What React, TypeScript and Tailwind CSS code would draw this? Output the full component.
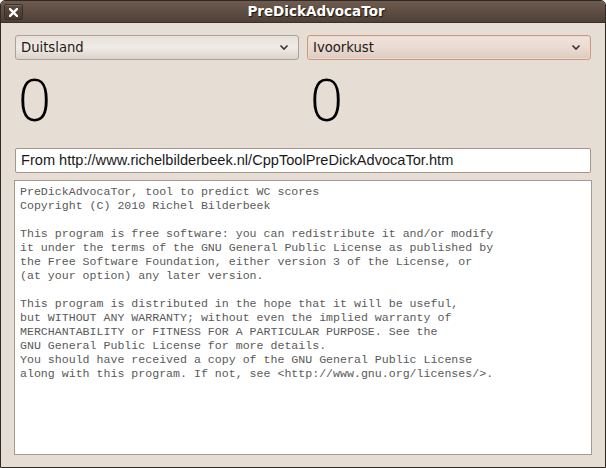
import React from 'react';

const licence = `PreDickAdvocaTor, tool to predict WC scores
Copyright (C) 2010 Richel Bilderbeek

This program is free software: you can redistribute it and/or modify
it under the terms of the GNU General Public License as published by
the Free Software Foundation, either version 3 of the License, or
(at your option) any later version.

This program is distributed in the hope that it will be useful,
but WITHOUT ANY WARRANTY; without even the implied warranty of
MERCHANTABILITY or FITNESS FOR A PARTICULAR PURPOSE. See the
GNU General Public License for more details.
You should have received a copy of the GNU General Public License
along with this program. If not, see <http://www.gnu.org/licenses/>.`;

function Chevron() {
  return (
    <svg width="10" height="7" viewBox="0 0 10 7" className="shrink-0">
      <path d="M1.5 1.5 L5 5 L8.5 1.5" fill="none" stroke="#3a332e" strokeWidth="1.6" />
    </svg>
  );
}

function Combo({ label, focused }: { label: string; focused?: boolean }) {
  return (
    <div
      className={
        focused
          ? 'h-[25px] flex items-center justify-between pl-[5px] pr-[9px] rounded-[3px] border border-[#c99b85] bg-gradient-to-b from-[#efe3dc] via-[#eadbd2] to-[#dccbc1] shadow-[inset_0_0_0_1px_#f1d6c9]'
          : 'h-[25px] flex items-center justify-between pl-[5px] pr-[9px] rounded-[3px] border border-[#aca196] bg-gradient-to-b from-[#e8e1da] via-[#f0ebe6] to-[#dcd3cb]'
      }
    >
      <span className="text-[13.2px] text-[#1f1a17]">{label}</span>
      <Chevron />
    </div>
  );
}

function Score() {
  return (
    <div
      className="h-[88px] pl-[3px] pt-[10px] text-[58px] leading-[58px] font-light text-black"
      style={{ fontFamily: '"Open Sans", sans-serif' }}
    >
      0
    </div>
  );
}

export default function App() {
  return (
    <div
      className="w-[606px] h-[468px] flex flex-col bg-[#e6ddd4] border border-[#2f2924] rounded-t-[5px] overflow-hidden"
      style={{ fontFamily: '"DejaVu Sans", sans-serif' }}
    >
      {/* Title bar */}
      <div className="h-[22px] shrink-0 relative flex items-center justify-center pl-[26px] bg-gradient-to-b from-[#6e5b4f] to-[#4f4037] border-b border-[#3a2f29]">
        <div className="absolute left-[3px] top-[3px] w-[19px] h-[16px] rounded-[2px] border border-[#3b2e27] bg-gradient-to-b from-[#5c4a3f] to-[#47392f] shadow-[inset_0_1px_0_#7a665a] flex items-center justify-center">
          <svg width="9" height="9" viewBox="0 0 9 9">
            <path d="M1 1 L8 8 M8 1 L1 8" stroke="#ffffff" strokeWidth="2.4" strokeLinecap="square" />
          </svg>
        </div>
        <span className="text-[13.5px] font-bold text-white [text-shadow:1px_1px_1px_#1d1510]">PreDickAdvocaTor</span>
      </div>

      {/* Content */}
      <div className="flex-1 flex flex-col px-[13px] pt-[12px] pb-[12px]">
        <div className="grid grid-cols-2 gap-[8px] px-[1px]">
          <div className="flex flex-col">
            <Combo label="Duitsland" />
            <Score />
          </div>
          <div className="flex flex-col">
            <Combo label="Ivoorkust" focused />
            <Score />
          </div>
        </div>

        <div className="h-[25px] mx-[1px] flex items-center px-[5px] bg-white border border-[#a49688] rounded-[2px]">
          <span className="text-[14.6px] text-[#1a1a1a]" style={{ fontFamily: '"Liberation Sans", sans-serif' }}>
            From http://www.richelbilderbeek.nl/CppToolPreDickAdvocaTor.htm
          </span>
        </div>

        <div className="mt-[7px] flex-1 bg-white border border-[#a69a8e] px-[5px] pt-[4px]">
          <pre
            className="text-[11.6px] leading-[14px] text-[#5a5a5a] whitespace-pre"
            style={{ fontFamily: '"Liberation Mono", monospace' }}
          >
            {licence}
          </pre>
        </div>
      </div>
    </div>
  );
}
